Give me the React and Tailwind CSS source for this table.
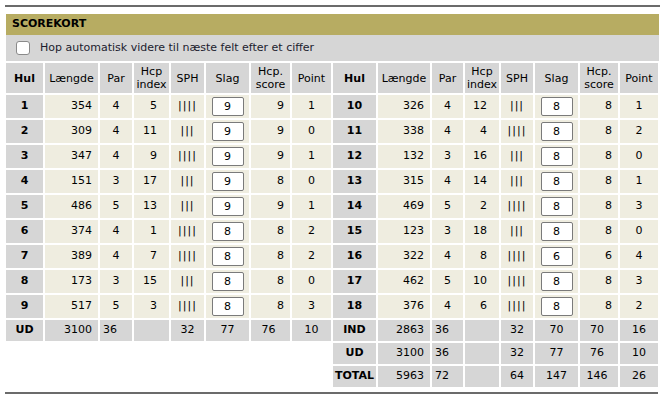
const FRONT = [
  [1, 354, 4, 5, 4, 9, 9, 1],
  [2, 309, 4, 11, 3, 9, 9, 0],
  [3, 347, 4, 9, 4, 9, 9, 1],
  [4, 151, 3, 17, 3, 9, 8, 0],
  [5, 486, 5, 13, 3, 9, 9, 1],
  [6, 374, 4, 1, 4, 8, 8, 2],
  [7, 389, 4, 7, 4, 8, 8, 2],
  [8, 173, 3, 15, 3, 8, 8, 0],
  [9, 517, 5, 3, 4, 8, 8, 3],
];

const BACK = [
  [10, 326, 4, 12, 3, 8, 8, 1],
  [11, 338, 4, 4, 4, 8, 8, 2],
  [12, 132, 3, 16, 3, 8, 8, 0],
  [13, 315, 4, 14, 3, 8, 8, 1],
  [14, 469, 5, 2, 4, 8, 8, 3],
  [15, 123, 3, 18, 3, 8, 8, 0],
  [16, 322, 4, 8, 4, 6, 6, 4],
  [17, 462, 5, 10, 4, 8, 8, 3],
  [18, 376, 4, 6, 4, 8, 8, 2],
];

const gray = "bg-[#d6d6d6]";
const cream = "bg-[#efede0]";

function HeaderRow() {
  const cell = `${gray} h-[30px] flex items-center justify-center text-center leading-[13px]`;
  return (
    <>
      <div className={`${cell} font-bold`}>Hul</div>
      <div className={cell}>Længde</div>
      <div className={cell}>Par</div>
      <div className={cell}>
        Hcp
        <br />
        index
      </div>
      <div className={cell}>SPH</div>
      <div className={cell}>Slag</div>
      <div className={cell}>
        Hcp.
        <br />
        score
      </div>
      <div className={cell}>Point</div>
    </>
  );
}

function HoleRow({ row }) {
  const [hul, len, par, hcp, sph, slag, score, point] = row;
  const cell = `${cream} h-[23px] flex items-center`;
  return (
    <>
      <div className={`${gray} h-[23px] flex items-center justify-center font-bold`}>
        {hul}
      </div>
      <div className={`${cell} justify-end pr-[6px]`}>{len}</div>
      <div className={`${cell} justify-center`}>{par}</div>
      <div className={`${cell} justify-end pr-[12px]`}>{hcp}</div>
      <div className={`${cell} justify-center tracking-[1px]`}>
        {"|".repeat(sph)}
      </div>
      <div className={`${cell} justify-center`}>
        <input
          type="text"
          defaultValue={slag}
          className="w-[32px] h-[19px] border border-[#7a7a7a] rounded-[2px] bg-white text-center text-[11px] outline-none"
        />
      </div>
      <div className={`${cell} justify-end pr-[6px]`}>{score}</div>
      <div className={`${cell} justify-center`}>{point}</div>
    </>
  );
}

function SumRow({ label, values }) {
  const [len, par, sph, slag, score, point] = values;
  const cell = `${gray} h-[21px] flex items-center`;
  return (
    <>
      <div className={`${cell} justify-center font-bold`}>{label}</div>
      <div className={`${cell} justify-end pr-[6px]`}>{len}</div>
      <div className={`${cell} pl-[3px]`}>{par}</div>
      <div className={cell}></div>
      <div className={`${cell} justify-center`}>{sph}</div>
      <div className={`${cell} justify-center`}>{slag}</div>
      <div className={`${cell} justify-center pr-[4px]`}>{score}</div>
      <div className={`${cell} justify-center`}>{point}</div>
    </>
  );
}

export default function App() {
  return (
    <div className="min-h-screen bg-white px-[5px] pt-[5px] text-[11px] text-black font-['DejaVu_Sans',Verdana,sans-serif]">
      <div className="h-[2px] bg-[#6b6b6b]" />

      <div className="mt-[7px] mx-[1px]">
        <div className="h-[21px] bg-[#b7ac62] flex items-center pl-[6px] font-bold">
          SCOREKORT
        </div>

        <div className={`${gray} h-[26px] flex items-center pl-[10px] gap-[10px]`}>
          <span className="w-[14px] h-[14px] bg-white border border-[#8a8a8a] rounded-[3px]" />
          <span className="text-[#1c1c2e]">
            Hop automatisk videre til næste felt efter et ciffer
          </span>
        </div>

        <div className="flex gap-[2px] mt-[2px]">
          <div className="grid grid-cols-[37px_53px_32px_35px_33px_43px_39px_39px] gap-[2px] content-start">
            <HeaderRow />
            {FRONT.map((r) => (
              <HoleRow key={r[0]} row={r} />
            ))}
            <SumRow label="UD" values={[3100, 36, 32, 77, 76, 10]} />
          </div>

          <div className="grid grid-cols-[43px_52px_31px_34px_32px_43px_38px_38px] gap-[2px] content-start">
            <HeaderRow />
            {BACK.map((r) => (
              <HoleRow key={r[0]} row={r} />
            ))}
            <SumRow label="IND" values={[2863, 36, 32, 70, 70, 16]} />
            <SumRow label="UD" values={[3100, 36, 32, 77, 76, 10]} />
            <SumRow label="TOTAL" values={[5963, 72, 64, 147, 146, 26]} />
          </div>
        </div>
      </div>

      <div className="mt-[5px] mr-[2px] h-[2px] bg-[#6b6b6b]" />
    </div>
  );
}
